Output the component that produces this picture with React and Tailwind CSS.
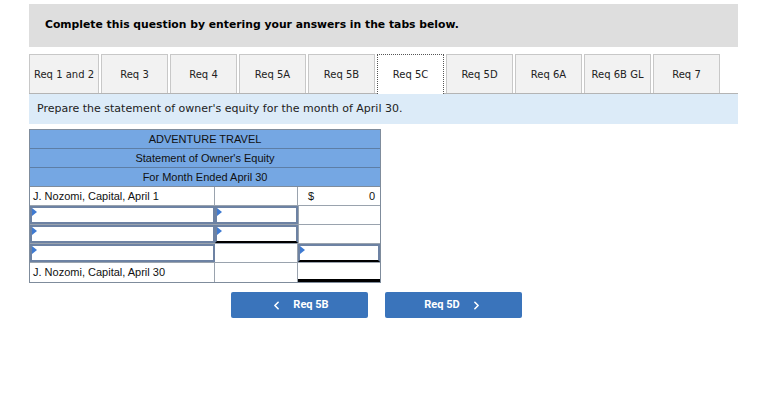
import { ChevronLeft, ChevronRight } from "lucide-react";

const tabs = ["Req 1 and 2", "Req 3", "Req 4", "Req 5A", "Req 5B", "Req 5C", "Req 5D", "Req 6A", "Req 6B GL", "Req 7"];
const tabWidths = [70, 67, 67, 67, 67, 67, 67, 67, 67, 67];

const Marker = () => (
    <span className="absolute left-0 top-0 w-0 h-0 border-t-[4px] border-b-[4px] border-l-[5px] border-t-transparent border-b-transparent border-l-[#3f7ad1]" />
);

const InputCell = ({ className = "" }) => (
    <div className={`relative h-full border-2 border-[#6d82a3] bg-white ${className}`}>
        <Marker />
    </div>
);

export default function App() {
    return (
        <div className="w-[778px] h-[409px] bg-white pt-1 pl-[29px] pr-[40px] font-['DejaVu_Sans',sans-serif]">
            <div className="h-[43px] bg-[#dedede] flex items-center pl-4">
                <h1 className="text-[10.8px] font-bold text-black">Complete this question by entering your answers in the tabs below.</h1>
            </div>

            <div className="mt-[7px] flex border-b border-[#b4b4b4] h-[40px] items-end">
                {tabs.map((t, i) => (
                    <div
                        key={t}
                        style={{ width: tabWidths[i] }}
                        className={
                            i === 5
                                ? "h-[40px] mr-[2px] -mb-px bg-white border border-dotted border-b-0 border-[#555] flex items-center justify-center text-[10px] text-[#222]"
                                : "h-[39px] mr-[2px] bg-[#f2f2f2] border border-b-0 border-[#c8c8c8] flex items-center justify-center text-[10px] text-[#222]"
                        }
                    >
                        {t}
                    </div>
                ))}
            </div>

            <div className="h-[30px] bg-[#dcebf8] flex items-center pl-2 text-[11px] text-[#222]">
                Prepare the statement of owner's equity for the month of April 30.
            </div>

            <div className="mt-[5px] w-[352px] border border-[#7f8c9c] font-['Liberation_Sans',sans-serif] text-[11px] text-[#111]">
                <div className="h-[19px] bg-[#75a7e3] border-b border-[#5d7ea6] flex items-center justify-center">ADVENTURE TRAVEL</div>
                <div className="h-[19px] bg-[#75a7e3] border-b border-[#5d7ea6] flex items-center justify-center">Statement of Owner's Equity</div>
                <div className="h-[19px] bg-[#75a7e3] border-b border-[#7f8c9c] flex items-center justify-center">For Month Ended April 30</div>

                <div className="grid grid-cols-[185px_83px_1fr] h-[19px] border-b border-[#9aa3ae]">
                    <div className="flex items-center pl-[3px] border-r border-[#9aa3ae]">J. Nozomi, Capital, April 1</div>
                    <div className="border-r border-[#9aa3ae]" />
                    <div className="flex items-center justify-between pl-[10px] pr-[5px]">
                        <span>$</span>
                        <span>0</span>
                    </div>
                </div>

                <div className="grid grid-cols-[185px_83px_1fr] h-[19px] border-b border-[#9aa3ae]">
                    <InputCell />
                    <InputCell />
                    <div className="border-l border-[#9aa3ae]" />
                </div>

                <div className="grid grid-cols-[185px_83px_1fr] h-[19px] border-b border-[#9aa3ae]">
                    <InputCell />
                    <InputCell className="border-b-black" />
                    <div className="border-l border-[#9aa3ae]" />
                </div>

                <div className="grid grid-cols-[185px_83px_1fr] h-[19px] border-b border-[#9aa3ae]">
                    <InputCell />
                    <div className="border-r border-[#9aa3ae]" />
                    <InputCell className="border-b-black" />
                </div>

                <div className="grid grid-cols-[185px_83px_1fr] h-[19px]">
                    <div className="flex items-center pl-[3px] border-r border-[#9aa3ae]">J. Nozomi, Capital, April 30</div>
                    <div className="border-r border-[#9aa3ae]" />
                    <div className="border-b-[3px] border-black" />
                </div>
            </div>

            <div className="mt-[9px] flex gap-[17px] pl-[202px] font-['Roboto',sans-serif]">
                <button className="w-[137px] h-[26px] bg-[#3a74bb] rounded-[2px] text-white text-[11px] font-bold flex items-center justify-center gap-[10px]">
                    <ChevronLeft size={13} strokeWidth={3} />
                    <span>Req 5B</span>
                </button>
                <button className="w-[137px] h-[26px] bg-[#3a74bb] rounded-[2px] text-white text-[11px] font-bold flex items-center justify-center gap-[10px]">
                    <span>Req 5D</span>
                    <ChevronRight size={13} strokeWidth={3} />
                </button>
            </div>
        </div>
    );
}
